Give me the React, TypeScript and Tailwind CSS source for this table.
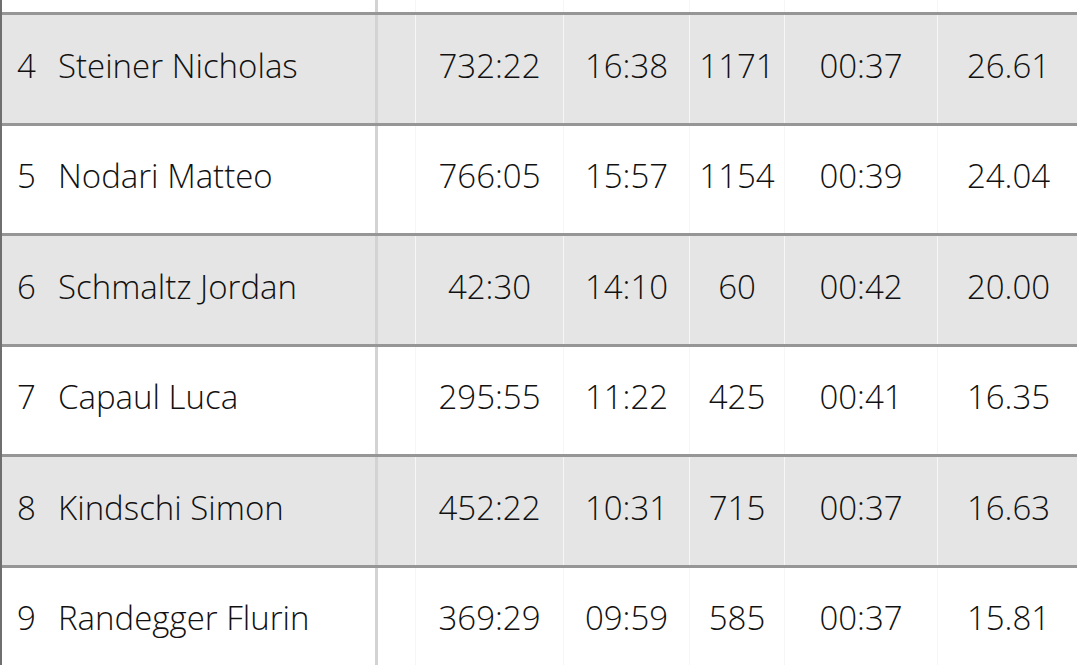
const ROWS = [
  { rank: 4, name: "Steiner Nicholas", total: "732:22", avg: "16:38", points: "1171", pace: "00:37", score: "26.61" },
  { rank: 5, name: "Nodari Matteo", total: "766:05", avg: "15:57", points: "1154", pace: "00:39", score: "24.04" },
  { rank: 6, name: "Schmaltz Jordan", total: "42:30", avg: "14:10", points: "60", pace: "00:42", score: "20.00" },
  { rank: 7, name: "Capaul Luca", total: "295:55", avg: "11:22", points: "425", pace: "00:41", score: "16.35" },
  { rank: 8, name: "Kindschi Simon", total: "452:22", avg: "10:31", points: "715", pace: "00:37", score: "16.63" },
  { rank: 9, name: "Randegger Flurin", total: "369:29", avg: "09:59", points: "585", pace: "00:37", score: "15.81" },
];

const COLS = "grid grid-cols-[376px_38px_148px_126px_95px_153px_141px]";

export default function App() {
  return (
    <div
      className="h-[665px] w-[1080px] overflow-hidden bg-white text-[#111111]"
      style={{ fontFamily: '"Open Sans", "Noto Sans", sans-serif' }}
    >
      <div className="w-[1077px] border-l-2 border-[#6f6f6f]">
        {/* spacer above first visible row */}
        <div className={`${COLS} h-[12px]`}>
          <div className="border-r-[3px] border-[#d3d3d3]" />
          <div className="border-r border-[#f6f6f6]" />
          <div className="border-r border-[#f6f6f6]" />
          <div className="border-r border-[#f6f6f6]" />
          <div className="border-r border-[#f6f6f6]" />
          <div className="border-r border-[#f6f6f6]" />
          <div />
        </div>

        {ROWS.map((r, i) => (
          <div
            key={r.rank}
            className={`${COLS} h-[110.5px] border-t-[3px] border-[#969696] text-[33px] font-light ${
              i % 2 === 0 ? "bg-[#e5e5e5]" : "bg-white"
            }`}
          >
            <div className="flex items-center border-r-[3px] border-[#d3d3d3] pb-[7px] pl-[15px]">
              <span className="w-[41px]">{r.rank}</span>
              <span>{r.name}</span>
            </div>
            <div className="border-r border-[#f6f6f6]" />
            <div className="flex items-center justify-center border-r border-[#f6f6f6] pb-[7px]">{r.total}</div>
            <div className="flex items-center justify-center border-r border-[#f6f6f6] pb-[7px]">{r.avg}</div>
            <div className="flex items-center justify-center border-r border-[#f6f6f6] pb-[7px]">{r.points}</div>
            <div className="flex items-center justify-center border-r border-[#f6f6f6] pb-[7px]">{r.pace}</div>
            <div className="flex items-center justify-center pb-[7px]">{r.score}</div>
          </div>
        ))}
      </div>
    </div>
  );
}
